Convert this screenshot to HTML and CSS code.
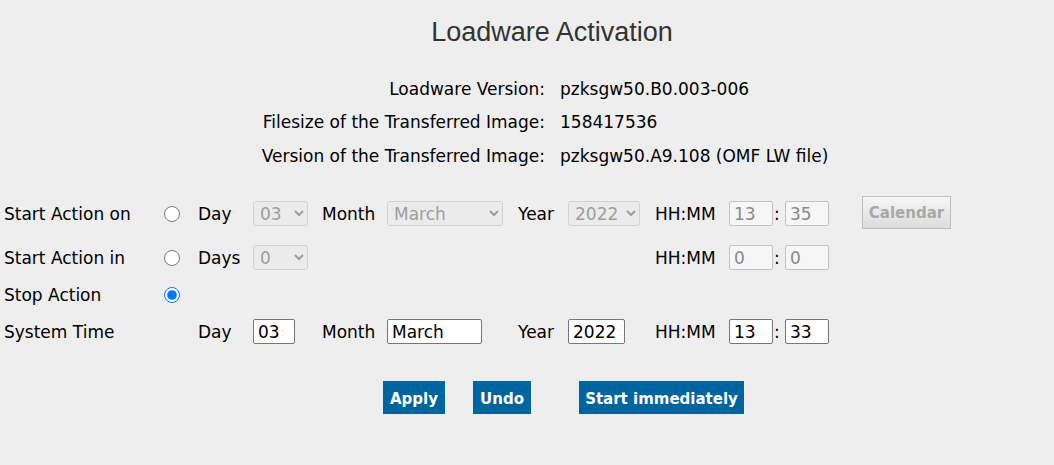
FILE: index.html
```html
<!DOCTYPE html>
<html>
<head>
    <meta charset="UTF-8">
    <title>Loadware Activation</title>
    <link rel="stylesheet" href="styles.css">
</head>
<body>
    <h1 class="title">Loadware Activation</h1>

    <div class="info">
        <span class="info-label">Loadware Version:</span>
        <span>pzksgw50.B0.003-006</span>
        <span class="info-label">Filesize of the Transferred Image:</span>
        <span>158417536</span>
        <span class="info-label">Version of the Transferred Image:</span>
        <span>pzksgw50.A9.108 (OMF LW file)</span>
    </div>

    <form class="schedule">
        <!-- start action on -->
        <span class="lbl">Start Action on</span>
        <input type="radio" name="mode" class="radio">
        <span>Day</span>
        <select class="sel-day" disabled><option>03</option></select>
        <span>Month</span>
        <select class="sel-month" disabled><option>March</option></select>
        <span>Year</span>
        <select class="sel-year" disabled><option>2022</option></select>
        <span>HH:MM</span>
        <input type="text" class="time" value="13" disabled>
        <span class="colon">:</span>
        <input type="text" class="time" value="35" disabled>
        <span></span>
        <button type="button" class="calendar" disabled>Calendar</button>

        <!-- start action in -->
        <span class="lbl">Start Action in</span>
        <input type="radio" name="mode" class="radio">
        <span>Days</span>
        <select class="sel-day" disabled><option>0</option></select>
        <span></span><span></span><span></span><span></span>
        <span>HH:MM</span>
        <input type="text" class="time" value="0" disabled>
        <span class="colon">:</span>
        <input type="text" class="time" value="0" disabled>
        <span></span><span></span>

        <!-- stop -->
        <span class="lbl">Stop Action</span>
        <input type="radio" name="mode" class="radio" checked>
        <span></span><span></span><span></span><span></span><span></span><span></span>
        <span></span><span></span><span></span><span></span><span></span><span></span>

        <!-- system time -->
        <span class="lbl">System Time</span>
        <span></span>
        <span>Day</span>
        <input type="text" class="txt w-day" value="03">
        <span>Month</span>
        <input type="text" class="txt w-month" value="March">
        <span>Year</span>
        <input type="text" class="txt w-year" value="2022">
        <span>HH:MM</span>
        <input type="text" class="txt time" value="13">
        <span class="colon">:</span>
        <input type="text" class="txt time" value="33">
        <span></span><span></span>
    </form>

    <div class="actions">
        <button type="button" class="btn btn-apply">Apply</button>
        <button type="button" class="btn btn-undo">Undo</button>
        <button type="button" class="btn btn-start">Start immediately</button>
    </div>
</body>
</html>
```

FILE: styles.css
```css
body {
    margin: 0;
    background-color: #eeeeee;
    font-family: "DejaVu Sans", Verdana, sans-serif;
    font-size: 17px;
    color: #000;
}
.title {
    margin: 0;
    padding: 17px 0 0 50px;
    height: 46px;
    box-sizing: border-box;
    text-align: center;
    font-family: "Liberation Sans", Arial, sans-serif;
    font-weight: normal;
    font-size: 27px;
    color: #333;
}
.info {
    display: grid;
    grid-template-columns: 545px auto;
    column-gap: 15px;
    grid-auto-rows: 33.5px;
    align-items: center;
    margin-top: 26px;
}
.info-label {
    text-align: right;
}
.schedule {
    display: grid;
    grid-template-columns: 156px 38px 55px 69px 65px 131px 50px 87px 74px 44px 12px 43px 34px auto;
    grid-template-rows: 44px 44px 30px 44px;
    align-items: center;
    padding-left: 4px;
    margin-top: 19px;
}
.radio {
    margin: 0 0 0 4px;
    width: 16px;
    height: 16px;
}
select, input[type="text"] {
    font-family: "DejaVu Sans", Verdana, sans-serif;
    font-size: 17px;
    height: 25px;
    box-sizing: border-box;
    margin: 0;
}
select:disabled {
    color: #7c7c7c;
    background-color: #ebebeb;
    border: 1px solid #c6c6c6;
    border-radius: 3px;
    padding: 0 2px;
}
.sel-day { width: 55px; }
.sel-month { width: 116px; }
.sel-year { width: 72px; }
input[type="text"] {
    padding: 1px 4px;
    border: 1px solid #767676;
    border-radius: 2px;
    background: #fff;
    color: #000;
}
input[type="text"]:disabled {
    border-color: #c4c4c4;
    background: #f6f6f6;
    color: #8a8a8a;
}
.time { width: 44px; }
.w-day { width: 42px; }
.w-month { width: 95px; }
.w-year { width: 57px; }
.colon {
    padding-left: 1px;
}
.calendar {
    width: 89px;
    height: 33px;
    padding: 2px 0 0;
    font-family: "DejaVu Sans", Verdana, sans-serif;
    font-weight: bold;
    font-size: 15px;
    color: #a8a8a8;
    border: 1px solid #bdbdbd;
    background: linear-gradient(#f6f6f6, #dcdcdc);
    margin-top: -3px;
}
.actions {
    display: flex;
    padding-left: 383px;
    margin-top: 27px;
}
.btn {
    height: 33px;
    padding: 4px 0 0;
    border: none;
    background-color: #00649f;
    color: #fff;
    font-family: "DejaVu Sans", Verdana, sans-serif;
    font-weight: bold;
    font-size: 15px;
    cursor: pointer;
}
.btn-apply { width: 62px; }
.btn-undo {
    width: 58px;
    margin-left: 28px;
}
.btn-start {
    width: 165px;
    margin-left: 48px;
}
```
